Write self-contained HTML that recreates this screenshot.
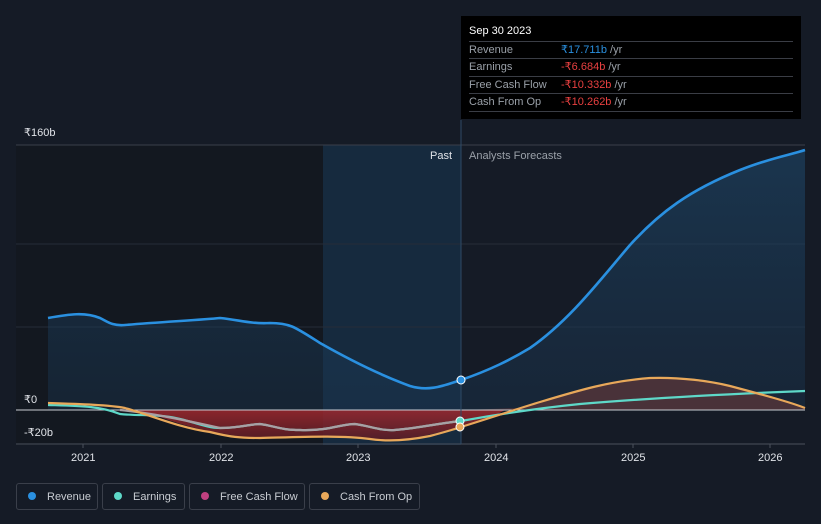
<!DOCTYPE html><html><head><style>
body{margin:0;width:821px;height:524px;background:#151b26;font-family:"Liberation Sans","Noto Sans CJK SC",sans-serif;overflow:hidden;position:relative}
.t{position:absolute;color:#e0e3e8;font-size:11px}
.tip{position:absolute;left:461px;top:16px;width:340px;height:103px;background:#000;}
.tip .h{position:absolute;left:8px;top:9px;color:#fff;font-size:11px}
.row{position:absolute;left:8px;width:324px;border-top:1px solid #3a3d45;height:17px;font-size:11px;color:#9aa0a8;line-height:17px}
.row span{position:absolute;left:92px}
.lg{position:absolute;top:483px;height:27px;border:1px solid #3a3f4a;border-radius:3px;font-size:11px;color:#c8ccd2;line-height:27px;box-sizing:border-box}
.lg i{display:inline-block;width:8px;height:8px;border-radius:50%;margin:0 11px 0 11px;vertical-align:-0px}
</style></head><body>
<svg width="821" height="524" style="position:absolute;left:0;top:0">
<defs><linearGradient id="rg" x1="0" y1="0" x2="0" y2="1"><stop offset="0" stop-color="#1e4a6e" stop-opacity=".7"/><stop offset="1" stop-color="#1a3550" stop-opacity=".5"/></linearGradient>
<linearGradient id="red" x1="0" y1="0" x2="0" y2="1"><stop offset="0" stop-color="#a0282e"/><stop offset="1" stop-color="#5a1c24"/></linearGradient></defs>
<rect x="16" y="145" width="307" height="300" fill="#131820"/>
<rect x="323" y="145" width="138" height="300" fill="#162a3e"/>
<line x1="16" y1="145" x2="805" y2="145" stroke="#3a3f4a"/>
<line x1="16" y1="244" x2="805" y2="244" stroke="#262c38"/>
<line x1="16" y1="327" x2="805" y2="327" stroke="#262c38"/>
<path d="M48,318 C70,314 85,312 100,318 C108,322 112,326 125,325 C160,322 200,320 220,318 C240,320 250,324 270,323 C290,323 295,327 320,343 C350,360 380,375 410,386 C430,392 445,385 461,380 C490,370 510,360 530,348 C570,320 600,280 630,245 C660,212 690,190 740,170 C770,158 790,155 805,150 L805,410 L48,410Z" fill="url(#rg)" opacity=".8"/>
<path d="M120,410 L160,417 C190,428 210,432 250,438 C300,437 340,436 395,441 C430,436 445,430 461,427 L490,418 L505,410Z" fill="url(#red)" opacity=".85"/>
<path d="M461,410 L520,408 C560,396 600,383 630,381 C660,377 690,377 710,381 C740,388 770,396 805,408 L805,410 Z" fill="#6a3a3a" opacity=".6"/>
<line x1="16" y1="410" x2="805" y2="410" stroke="#c8ccd2" stroke-width="1"/>
<line x1="16" y1="444" x2="805" y2="444" stroke="#4a505c"/>
<line x1="461" y1="120" x2="461" y2="444" stroke="#2e4a66"/>
<path d="M48,405 C80,406 100,406 120,414 C140,416 150,414 170,417 C190,420 205,428 220,428 C240,428 250,424 260,424 C275,426 280,430 300,430 C330,431 340,424 355,424 C370,426 380,431 395,430 C420,428 440,423 461,421 C500,414 540,408 580,404 C640,399 700,395 805,391" fill="none" stroke="#5ed8c8" stroke-width="2.2"/>
<path d="M120,410 C150,413 175,418 220,428 C240,428 250,424 260,424 C275,426 280,430 300,430 C330,431 340,424 355,424 C370,426 380,431 395,430 C420,428 440,423 461,421" fill="none" stroke="#a8a0a4" stroke-width="2.2"/>
<path d="M48,403 C80,404 110,405 125,408 C150,415 180,428 210,432 C230,437 240,438 260,438 C300,437 340,435 370,439 C390,442 410,440 430,436 C445,432 455,429 461,427 C490,418 520,408 540,402 C580,390 610,381 650,378 C680,377 710,381 730,386 C760,394 790,402 805,408" fill="none" stroke="#e8a85a" stroke-width="2.2"/>
<path d="M48,318 C70,314 85,312 100,318 C108,322 112,326 125,325 C160,322 200,320 220,318 C240,320 250,324 270,323 C290,323 295,327 320,343 C350,360 380,375 410,386 C430,392 445,385 461,380 C490,370 510,360 530,348 C570,320 600,280 630,245 C660,212 690,190 740,170 C770,158 790,155 805,150" fill="none" stroke="#2a90e0" stroke-width="2.6"/>
<circle cx="461" cy="380" r="4" fill="#2a90e0" stroke="#fff" stroke-width="1"/>
<circle cx="460" cy="421" r="4" fill="#5ed8c8" stroke="#fff" stroke-width="1"/>
<circle cx="460" cy="427" r="4" fill="#e8a85a" stroke="#fff" stroke-width="1"/>
<g stroke="#4a505c"><line x1="83" y1="444" x2="83" y2="448"/><line x1="221" y1="444" x2="221" y2="448"/><line x1="358" y1="444" x2="358" y2="448"/><line x1="496" y1="444" x2="496" y2="448"/><line x1="633" y1="444" x2="633" y2="448"/><line x1="770" y1="444" x2="770" y2="448"/></g>
</svg>
<div class="t" style="left:24px;top:126px">₹160b</div>
<div class="t" style="left:24px;top:393px">₹0</div>
<div class="t" style="left:24px;top:426px">-₹20b</div>
<div class="t" style="left:430px;top:150px">Past</div>
<div class="t" style="left:469px;top:150px;color:#9aa0a8">Analysts Forecasts</div>
<div class="t" style="left:71px;top:452px">2021</div>
<div class="t" style="left:209px;top:452px">2022</div>
<div class="t" style="left:346px;top:452px">2023</div>
<div class="t" style="left:484px;top:452px">2024</div>
<div class="t" style="left:621px;top:452px">2025</div>
<div class="t" style="left:758px;top:452px">2026</div>
<div class="tip"><div class="h">Sep 30 2023</div>
<div class="row" style="top:25px">Revenue<span><b style="font-weight:normal;color:#2a90e0">₹17.711b</b> /yr</span></div>
<div class="row" style="top:42px">Earnings<span><b style="font-weight:normal;color:#e84040">-₹6.684b</b> /yr</span></div>
<div class="row" style="top:60px">Free Cash Flow<span><b style="font-weight:normal;color:#e84040">-₹10.332b</b> /yr</span></div>
<div class="row" style="top:77px">Cash From Op<span><b style="font-weight:normal;color:#e84040">-₹10.262b</b> /yr</span></div>
<div class="row" style="top:95px;height:0"></div>
</div>
<div class="lg" style="left:16px;width:82px"><i style="background:#2a90e0"></i>Revenue</div>
<div class="lg" style="left:102px;width:83px"><i style="background:#5ed8c8"></i>Earnings</div>
<div class="lg" style="left:189px;width:116px"><i style="background:#c04080"></i>Free Cash Flow</div>
<div class="lg" style="left:309px;width:111px"><i style="background:#e8a85a"></i>Cash From Op</div>
</body></html>
